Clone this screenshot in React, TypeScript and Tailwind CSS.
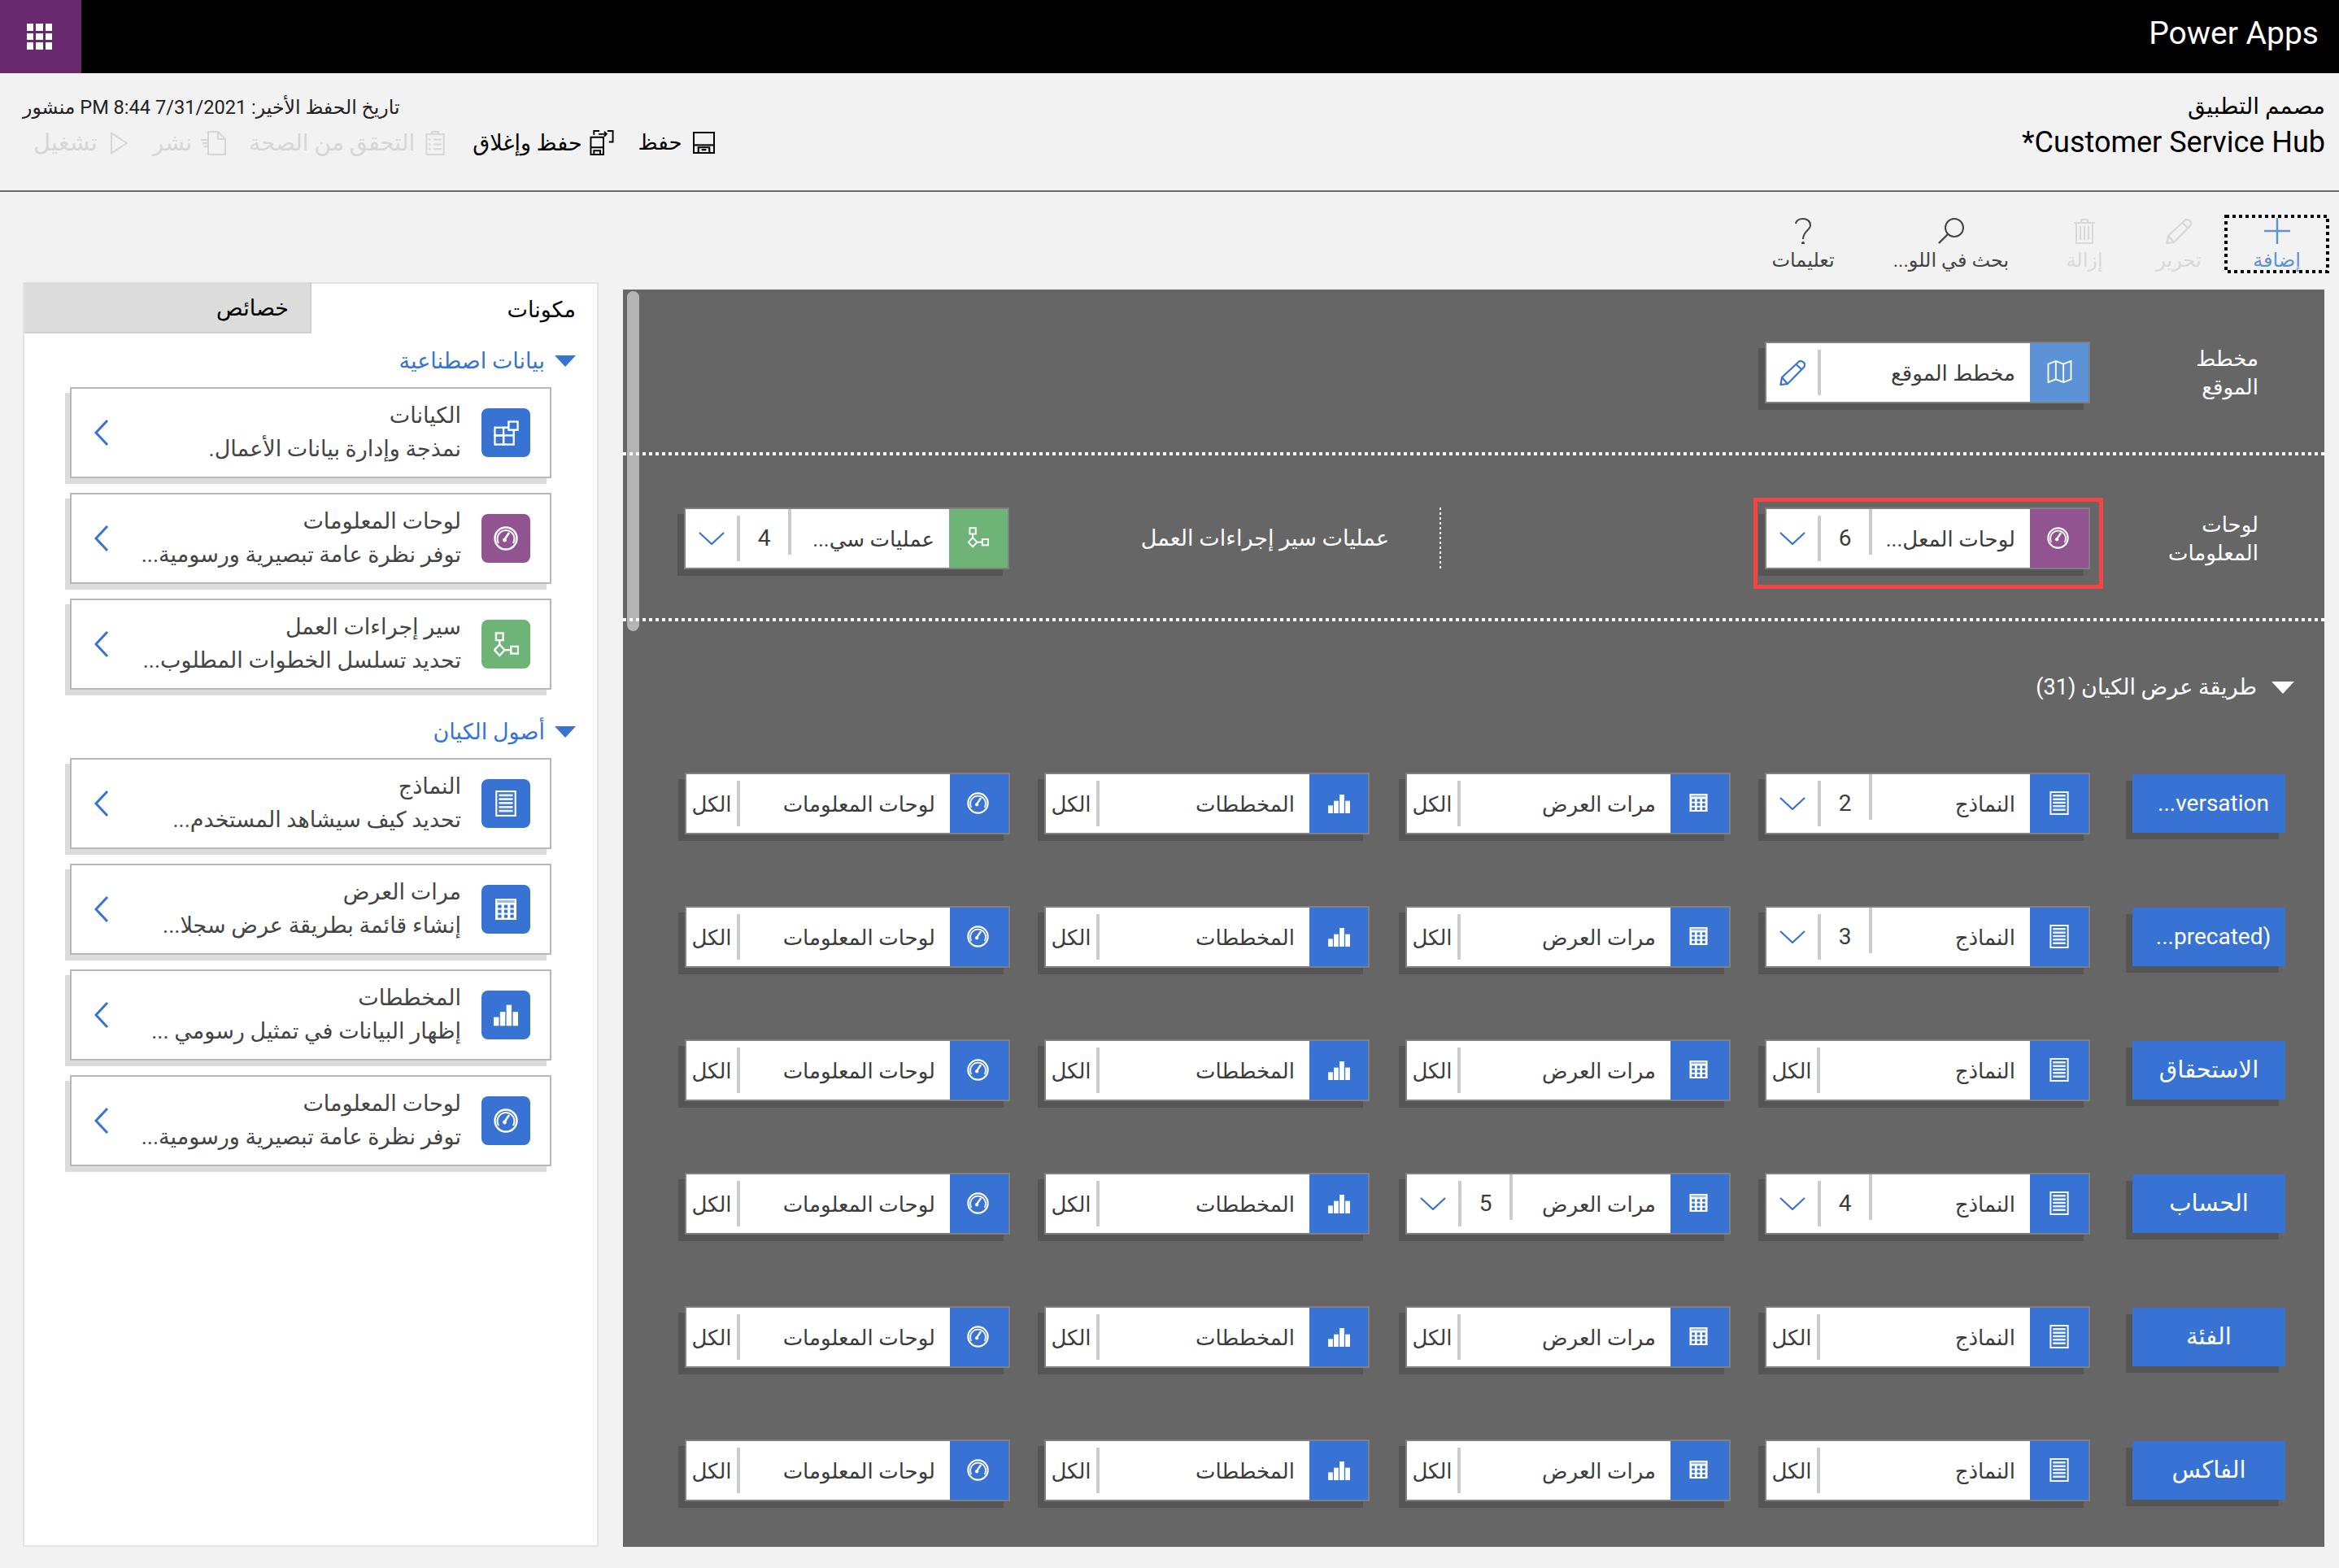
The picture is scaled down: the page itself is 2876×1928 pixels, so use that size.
import React from 'react';

type IC = { className?: string };
const Gauge = ({ className }: IC) => (
  <svg viewBox="0 0 30 30" fill="none" stroke="currentColor" className={className}>
    <ellipse cx="15" cy="15" rx="13.5" ry="13.5" strokeWidth="2.4" />
    <path d="M6 21 A10.5 10.5 0 1 1 24 21" strokeWidth="2" />
    <path d="M13 17 L19 8" strokeWidth="2.6" />
    <circle cx="13.5" cy="17" r="2.4" fill="currentColor" stroke="none" />
  </svg>
);
const Form = ({ className }: IC) => (
  <svg viewBox="0 0 24 30" className={className}>
    <rect x="1" y="1" width="22" height="28" fill="none" stroke="currentColor" strokeWidth="2" />
    <path d="M4 5.5H20M4 10H20M4 14.5H20M4 19H20M4 23.5H20" stroke="currentColor" strokeWidth="2.6" strokeOpacity="0.9" />
  </svg>
);
const GridI = ({ className }: IC) => (
  <svg viewBox="0 0 24 24" className={className}>
    <rect x="0" y="0" width="24" height="24" fill="currentColor" />
    <rect x="2" y="1.6" width="20" height="3" fill="#9dbdea" />
    <g fill="#3873d3">
      <rect x="3" y="7" width="4" height="3.6" /><rect x="10" y="7" width="4" height="3.6" /><rect x="17" y="7" width="4" height="3.6" />
      <rect x="3" y="12.6" width="4" height="3.6" /><rect x="10" y="12.6" width="4" height="3.6" /><rect x="17" y="12.6" width="4" height="3.6" />
      <rect x="3" y="18.2" width="4" height="3.6" /><rect x="10" y="18.2" width="4" height="3.6" /><rect x="17" y="18.2" width="4" height="3.6" />
    </g>
  </svg>
);
const Chart = ({ className }: IC) => (
  <svg viewBox="0 0 28 24" fill="currentColor" className={className}>
    <rect x="0" y="14" width="6" height="10" /><rect x="7.3" y="8" width="6" height="16" /><rect x="14.6" y="0" width="6" height="24" /><rect x="22" y="8" width="6" height="16" />
  </svg>
);
const Entity = ({ className }: IC) => (
  <svg viewBox="0 0 32 32" fill="none" stroke="currentColor" strokeWidth="2.4" className={className}>
    <rect x="1.5" y="9" width="11" height="10" /><rect x="12.5" y="19" width="13" height="11.5" /><rect x="1.5" y="19" width="11" height="11.5" /><path d="M12.5 9H19M25.5 12V19" />
    <rect x="19" y="1.5" width="11.5" height="10.5" />
  </svg>
);
const Flow = ({ className }: IC) => (
  <svg viewBox="0 0 32 32" fill="none" stroke="currentColor" strokeWidth="2.4" className={className}>
    <rect x="3" y="1.5" width="9" height="9" /><path d="M7.5 10.5V16" /><path d="M7.5 16L14 23L7.5 30L1 23Z" /><path d="M14 23H22" /><rect x="22" y="18.5" width="9" height="9" />
  </svg>
);
const MapI = ({ className }: IC) => (
  <svg viewBox="0 0 32 30" fill="none" stroke="currentColor" strokeWidth="2" className={className}>
    <path d="M1 5L11 1L21 5L31 1V25L21 29L11 25L1 29Z" /><path d="M11 1V25M21 5V29" />
  </svg>
);
const Pencil = ({ className }: IC) => (
  <svg viewBox="0 0 32 32" fill="none" stroke="currentColor" strokeWidth="2.2" className={className}>
    <path d="M24 2.5C26 1 29 2.5 30.5 4.5C31.5 6 31 8 30 9.5L10 30L1.5 31L3 22Z" /><path d="M21 6.5L27.5 12.5M3 22L10 30" />
  </svg>
);
const ChevDown = () => (
  <svg viewBox="0 0 32 16" fill="none" stroke="#3873d3" strokeWidth="2.2" className="w-[32px] h-[16px]"><path d="M1 1L16 15L31 1" /></svg>
);
const ChevLeft = () => (
  <svg viewBox="0 0 18 32" fill="none" stroke="#3873d3" strokeWidth="3" className="w-[18px] h-[32px]"><path d="M16 1L2 16L16 31" /></svg>
);
const Tri = ({ className }: IC) => (
  <svg viewBox="0 0 26 14" fill="currentColor" className={className}><path d="M0 0H26L13 14Z" /></svg>
);

const Divider = () => <div className="w-[4px] h-[56px] bg-[#cccccc] shrink-0" />;

function Box({ color = 'bg-[#3873d3]', icon, label, count, extra, cls = '' }: { color?: string; icon: React.ReactNode; label: string; count?: string; extra?: 'all' | 'pencil'; cls?: string }) {
  return (
    <div className={`relative w-[400px] h-[76px] shrink-0 flex items-stretch bg-white border-2 border-[#808080] shadow-[-8px_8px_0_#555555] ${cls}`}>
      <div className={`w-[72px] shrink-0 flex items-center justify-center ${color}`}>{icon}</div>
      <div className="flex-1 flex items-center pr-[18px] pt-[2px] text-[26px] text-[#3c3c3c] whitespace-nowrap overflow-hidden">{label}</div>
      {count && (
        <>
          <Divider /><div className="w-[59px] shrink-0 self-center text-center text-[28px] text-[#3c3c3c]">{count}</div>
        </>
      )}
      <div className="flex items-center shrink-0">
        {(count || extra === 'pencil') && (<><Divider /><div className="w-[63px] flex items-center justify-center">{extra === 'pencil' ? <Pencil className="w-[32px] h-[32px] text-[#3873d3]" /> : <ChevDown />}</div></>)}
        {extra === 'all' && (<><Divider /><div className="w-[62px] pt-[2px] text-center text-[26px] text-[#3c3c3c]">الكل</div></>)}
      </div>
    </div>
  );
}

const iGauge = <Gauge className="w-[27px] h-[27px] text-white -mt-[2px] -ml-[3px]" />;
const iForm = <Form className="w-[24px] h-[29px] text-white -mt-[2px]" />;
const iGrid = <GridI className="w-[23px] h-[22px] text-white -mt-[2px] -ml-[3px]" />;
const iChart = <Chart className="w-[27px] h-[23px] text-white" />;

const rows: { name: string; forms?: string; views?: string; ltr?: boolean }[] = [
  { name: '...versation', forms: '2', ltr: true },
  { name: '...precated)', forms: '3', ltr: true },
  { name: 'الاستحقاق' },
  { name: 'الحساب', forms: '4', views: '5' },
  { name: 'الفئة' },
  { name: 'الفاكس' },
];

const cards1 = [
  { c: 'bg-[#3873d3]', i: <Entity className="w-[31px] h-[31px] text-white" />, t: 'الكيانات', d: 'نمذجة وإدارة بيانات الأعمال.' },
  { c: 'bg-[#925491]', i: <Gauge className="w-[30px] h-[30px] text-white" />, t: 'لوحات المعلومات', d: 'توفر نظرة عامة تبصيرية ورسومية...' },
  { c: 'bg-[#6eb476]', i: <Flow className="w-[31px] h-[31px] text-white" />, t: 'سير إجراءات العمل', d: 'تحديد تسلسل الخطوات المطلوب...' },
];
const cards2 = [
  { c: 'bg-[#3873d3]', i: <Form className="w-[28px] h-[32px] text-white" />, t: 'النماذج', d: 'تحديد كيف سيشاهد المستخدم...' },
  { c: 'bg-[#3873d3]', i: <GridI className="w-[28px] h-[26px] text-white" />, t: 'مرات العرض', d: 'إنشاء قائمة بطريقة عرض سجلا...' },
  { c: 'bg-[#3873d3]', i: <Chart className="w-[30px] h-[27px] text-white" />, t: 'المخططات', d: 'إظهار البيانات في تمثيل رسومي ...' },
  { c: 'bg-[#3873d3]', i: <Gauge className="w-[30px] h-[30px] text-white" />, t: 'لوحات المعلومات', d: 'توفر نظرة عامة تبصيرية ورسومية...' },
];

function Card({ c, i, t, d }: { c: string; i: React.ReactNode; t: string; d: string }) {
  return (
    <div className="w-[592px] h-[112px] shrink-0 flex items-center bg-white border-2 border-[#b8b8b8] shadow-[-6px_7px_0_#dcdcdc]">
      <div className={`w-[60px] h-[60px] mr-[24px] rounded-[8px] flex items-center justify-center shrink-0 ${c}`}>{i}</div>
      <div className="flex-1 mr-[25px] text-[#444444]">
        <div className="text-[27px] leading-[41px] whitespace-nowrap">{t}</div>
        <div className="text-[27px] leading-[41px] whitespace-nowrap">{d}</div>
      </div>
      <div className="ml-[28px]"><ChevLeft /></div>
    </div>
  );
}

function Section({ title, cards, cls }: { title: string; cards: typeof cards1; cls: string }) {
  return (
    <div className={cls}>
      <div className="flex items-center h-[24px] pr-[26px] text-[#3873d3] text-[27px]">
        <Tri className="w-[26px] h-[14px]" />
        <span className="mr-[12px] whitespace-nowrap">{title}</span>
      </div>
      <div className="flex flex-col gap-[18px] mt-[20px] mr-[56px]">
        {cards.map((x, k) => <Card key={k} {...x} />)}
      </div>
    </div>
  );
}

function Rib({ icon, text, cls, w }: { icon: React.ReactNode; text: string; cls: string; w: string }) {
  return (
    <div className={`flex flex-col items-center ${w} ${cls}`}>
      <div className="h-[32px] flex items-center justify-center">{icon}</div>
      <div className="text-[24px] leading-[32px] mt-[4px] whitespace-nowrap">{text}</div>
    </div>
  );
}

function Tool({ icon, text, dis, cls, gap }: { icon: React.ReactNode; text: string; dis?: boolean; cls: string; gap: string }) {
  return (
    <div className={`flex items-center ${gap} ${dis ? 'text-[#d6d6d6]' : 'text-black'}`}>
      {icon}
      <span className={`whitespace-nowrap ${cls}`}>{text}</span>
    </div>
  );
}

const dots = 'relative h-[4px] bg-[repeating-linear-gradient(to_right,#ffffff_0_4px,transparent_4px_8px)]';

export default function App() {
  return (
    <div dir="rtl" className="w-[2876px] h-[1928px] bg-[#f2f2f2] flex flex-col overflow-hidden [font-family:'Roboto','DejaVu_Sans',sans-serif]">
      <div className="h-[90px] bg-black flex items-center justify-between shrink-0">
        <div dir="ltr" className="mr-[25px] -mt-[8px] text-white text-[39px]">Power Apps</div>
        <div className="w-[100px] h-full bg-[#68296f] flex items-center justify-center">
          <div className="grid grid-cols-3 gap-[3px] -ml-[3px]">
            {Array.from({ length: 9 }).map((_, k) => <div key={k} className="w-[8.5px] h-[8.5px] bg-white" />)}
          </div>
        </div>
      </div>

      <div className="h-[146px] shrink-0 border-b-2 border-[#6b6b6b] flex justify-between pr-[17px] pl-[28px] pt-[23px]">
        <div className="text-black">
          <div className="text-[28px] leading-[36px]">مصمم التطبيق</div>
          <div dir="ltr" className="text-[36px] leading-[48px] mt-[2px]">*Customer Service Hub</div>
        </div>
        <div className="flex flex-col items-start">
          <div className="text-[23.6px] leading-[36px] text-[#222] mt-[1px] whitespace-nowrap">تاريخ الحفظ الأخير: 7/31/2021 8:44 PM منشور</div>
          <div className="flex items-center mt-[4px] mr-[-387px] w-[850px]">
            <Tool gap="gap-[13px]" cls="text-[26px]" text="حفظ" icon={
              <svg viewBox="0 0 28 28" fill="none" stroke="currentColor" strokeWidth="2.2" className="w-[27px] h-[27px]"><path d="M1 1H27V27H1Z" /><path d="M1 17H27" /><path d="M7 27V20H21V27" /><path d="M11 23H17" /></svg>
            } />
            <div className="w-[30px] shrink-0" />
            <Tool gap="gap-[9px]" cls="text-[27px]" text="حفظ وإغلاق" icon={
              <svg viewBox="0 0 30 32" fill="none" stroke="currentColor" strokeWidth="2" className="w-[30px] h-[31px]"><path d="M1 9H17V31H1Z" /><path d="M1 22H17M5 31V26H13V31" /><path d="M5 6V1H12M22 1H29V15H24" /><path d="M11 5H21M18 2L21 5L18 8" /></svg>
            } />
            <div className="w-[34px] shrink-0" />
            <Tool dis gap="gap-[13px]" cls="text-[28px]" text="التحقق من الصحة" icon={
              <svg viewBox="0 0 24 32" fill="none" stroke="currentColor" strokeWidth="2" className="w-[24px] h-[31px]"><path d="M1 5H23V31H1Z" /><path d="M8 5V2H16V5" /><path d="M4 11L6 13M10 12H20M4 17L6 19M10 18H20M4 23L6 25M10 24H20" /></svg>
            } />
            <div className="w-[28px] shrink-0" />
            <Tool dis gap="gap-[10px]" cls="text-[28px]" text="نشر" icon={
              <svg viewBox="0 0 32 30" fill="none" stroke="currentColor" strokeWidth="2" className="w-[32px] h-[30px]"><path d="M10 1H22L31 10V29H10Z" /><path d="M22 1V10H31" /><path d="M1 11H10M3 15H10M5 19H10" /></svg>
            } />
            <div className="w-[31px] shrink-0" />
            <Tool dis gap="gap-[16px]" cls="text-[29px]" text="تشغيل" icon={
              <svg viewBox="0 0 22 28" fill="none" stroke="currentColor" strokeWidth="2" className="w-[21px] h-[28px]"><path d="M1 1L21 14L1 27Z" /></svg>
            } />
          </div>
        </div>
      </div>

      <div className="h-[110px] shrink-0 flex items-start pt-[28px] pr-[12px] relative">
        <Rib w="w-[129px]" cls="text-[#5b93d6] relative h-[72px] pt-[4px]" text="إضافة" icon={
          <svg viewBox="0 0 32 32" stroke="currentColor" strokeWidth="2.4" className="w-[32px] h-[32px]"><path d="M16 0V32M0 16H32" /></svg>
        } />
        <Rib w="w-[90px]" cls="text-[#d8d8d8] mr-[11px] pt-[4px]" text="تحرير" icon={<Pencil className="w-[32px] h-[32px]" />} />
        <Rib w="w-[90px]" cls="text-[#d8d8d8] mr-[26px] pt-[4px]" text="إزالة" icon={
          <svg viewBox="0 0 28 32" fill="none" stroke="currentColor" strokeWidth="2" className="w-[28px] h-[32px]"><path d="M1 6H27M10 6V2H18V6M4 6V31H24V6M9 10V27M14 10V27M19 10V27" /></svg>
        } />
        <Rib w="w-[150px]" cls="text-[#444] mr-[44px] pt-[4px]" text="بحث في اللو..." icon={
          <svg viewBox="0 0 32 32" fill="none" stroke="currentColor" strokeWidth="2" className="w-[32px] h-[32px]"><circle cx="20" cy="12" r="11" /><path d="M12 20L1 31" strokeWidth="2.4" /></svg>
        } />
        <Rib w="w-[110px]" cls="text-[#444] mr-[52px] pt-[4px]" text="تعليمات" icon={
          <svg viewBox="0 0 20 32" fill="none" stroke="currentColor" strokeWidth="2" className="w-[20px] h-[32px]"><path d="M1 7C2 2 6 1 10 1C15 1 19 4 19 9C19 15 10 16 10 26" /><circle cx="10" cy="31" r="1" fill="currentColor" /></svg>
        } />
        <svg className="absolute right-[12px] top-[28px] w-[129px] h-[72px]" viewBox="0 0 129 72" fill="none"><rect x="2" y="2" width="125" height="68" stroke="#000" strokeWidth="4" strokeDasharray="4 4" /></svg>
      </div>

      <div className="flex-1 min-h-0 flex pr-[18px] pl-[28px] pb-[26px] gap-[30px]">
        <div className="relative w-[2092px] h-[1546px] mt-[10px] bg-[#666666] text-white shrink-0 overflow-hidden">
          <div className="absolute left-[5px] top-[2px] w-[15px] h-[418px] rounded-full bg-[#b4b4b4]" />

          <div className="h-[200px] flex items-start pr-[81px] pt-[64px]">
            <div className="w-[207px] shrink-0 text-[26px] leading-[35px] mt-[4px] pl-[60px]">مخطط الموقع</div>
            <Box color="bg-[#5b93d6]" icon={<MapI className="w-[33px] h-[28px] text-white -mt-[2px]" />} label="مخطط الموقع" extra="pencil" />
          </div>
          <div className={dots} />
          <div className="h-[200px] flex items-start pr-[81px] pt-[64px]">
            <div className="w-[207px] shrink-0 text-[26px] leading-[35px] mt-[4px] pl-[60px]">لوحات المعلومات</div>
            <div className="relative">
              <Box color="bg-[#925491]" icon={iGauge} label="لوحات المعل..." count="6" />
              <div className="absolute -top-[12px] -bottom-[24px] -right-[16px] -left-[14px] border-[5px] border-[#f44444]" />
            </div>
            <div className="w-[2px] h-[76px] mr-[398px] bg-[repeating-linear-gradient(to_bottom,#ffffff_0_3px,transparent_3px_6px)] shrink-0" />
            <div className="w-[307px] mr-[62px] shrink-0 text-[27px] leading-[76px] whitespace-nowrap">عمليات سير إجراءات العمل</div>
            <Box cls="mr-[160px]" color="bg-[#6eb476]" icon={<Flow className="w-[26px] h-[28px] text-white -mt-[2px]" />} label="عمليات سي..." count="4" />
          </div>
          <div className={dots} />

          <div className="flex items-center pr-[37px] mt-[74px] h-[14px] text-[27px]">
            <Tri className="w-[28px] h-[15px] text-white shrink-0" />
            <span className="mr-[18px] whitespace-nowrap">طريقة عرض الكيان (31)</span>
          </div>

          <div className="flex flex-col gap-[88px] mt-[98px]">
            {rows.map((r, k) => (
              <div key={k} className="flex items-start pr-[48px]">
                <div className="relative w-[188px] h-[72px] mt-[2px] shrink-0 bg-[#3873d3] shadow-[-8px_8px_0_#555555] flex items-center justify-center text-white text-[29px]">
                  <span dir={r.ltr ? 'ltr' : 'rtl'} className={r.ltr ? '-mr-[11px] text-[28px]' : ''}>{r.name}</span>
                </div>
                <Box cls="mr-[52px]" icon={iForm} label="النماذج" count={r.forms} extra={r.forms ? undefined : 'all'} />
                <Box cls="mr-[42px]" icon={iGrid} label="مرات العرض" count={r.views} extra={r.views ? undefined : 'all'} />
                <Box cls="mr-[44px]" icon={iChart} label="المخططات" extra="all" />
                <Box cls="mr-[42px]" icon={iGauge} label="لوحات المعلومات" extra="all" />
              </div>
            ))}
          </div>
        </div>

        <div className="w-[708px] h-[1555px] mt-[1px] shrink-0 bg-white border-2 border-[#e2e2e2] border-t-0 flex flex-col">
          <div className="flex h-[63px] shrink-0 text-black text-[27px]">
            <div className="w-[351px] pr-[26px] pt-[3px] flex items-center border-t-2 border-[#e2e2e2]">مكونات</div>
            <div className="flex-1 bg-[#dcdcdc] border-b-2 border-r-2 border-[#cfcfcf] pt-[3px] flex items-center justify-start pr-[26px]">خصائص</div>
          </div>
          <Section title="بيانات اصطناعية" cards={cards1} cls="mt-[22px]" />
          <Section title="أصول الكيان" cards={cards2} cls="mt-[40px]" />
        </div>
      </div>
    </div>
  );
}
